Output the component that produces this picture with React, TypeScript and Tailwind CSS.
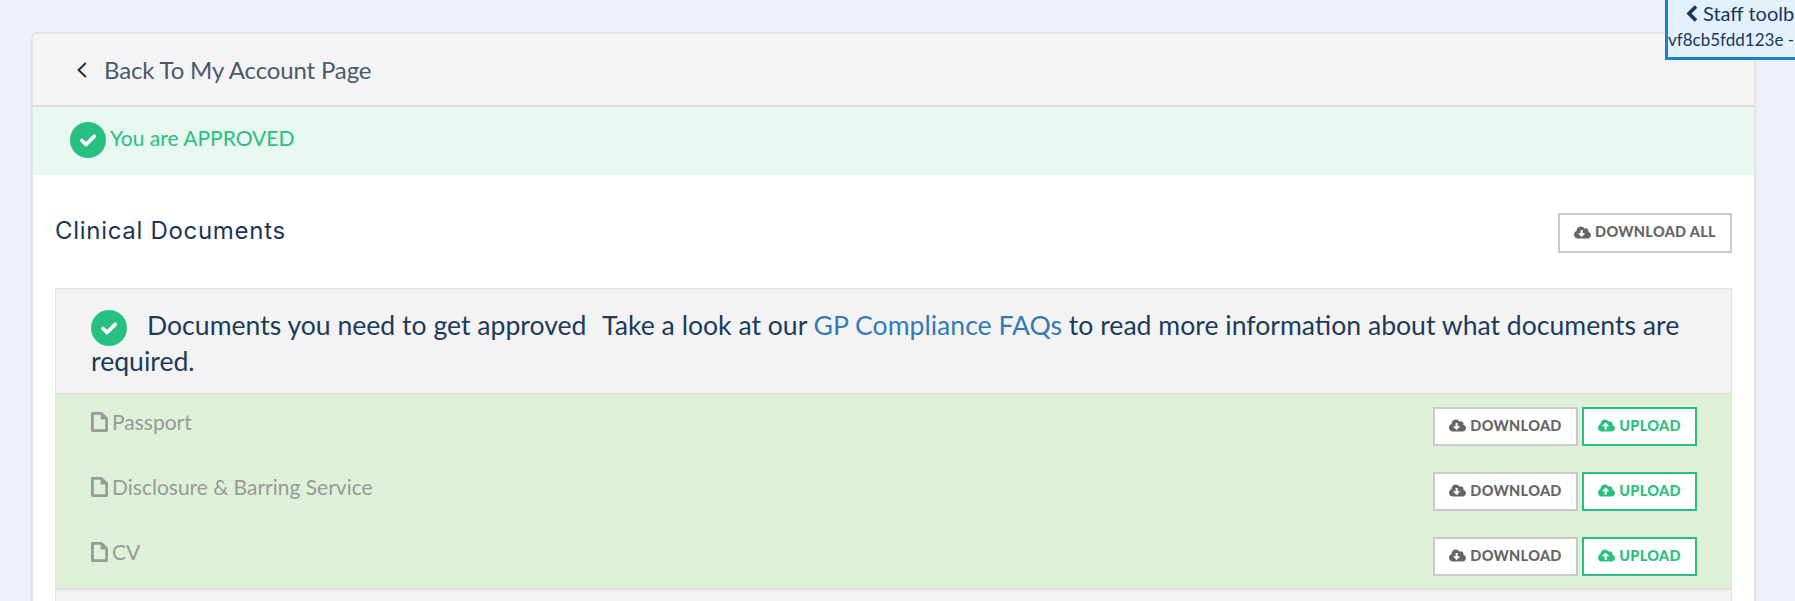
import { FaCloudDownloadAlt, FaCloudUploadAlt } from "react-icons/fa";

const font = { fontFamily: '"Lato", sans-serif' };

function Check({ className = "" }: { className?: string }) {
  return (
    <svg viewBox="0 0 36 36" className={`inline-block h-9 w-9 shrink-0 ${className}`}>
      <circle cx="18" cy="18" r="18" fill="#28c081" />
      <path d="M12 18.5l4 4 8.2-8.2" fill="none" stroke="#ffffff" strokeWidth="3.8" strokeLinecap="round" strokeLinejoin="round" />
    </svg>
  );
}

function FileIcon() {
  return (
    <svg viewBox="0 0 17 20" className="h-[20px] w-[17px] shrink-0">
      <path d="M1.4 1.4H10.5L15.6 6.5V18.6H1.4Z" fill="none" stroke="#999999" strokeWidth="2.8" strokeLinejoin="round" />
      <path d="M9.6 1L16.5 7.6H9.6Z" fill="#999999" />
    </svg>
  );
}

function BackChevron() {
  return (
    <svg viewBox="0 0 10 16" className="mr-[17px] h-[16px] w-[10px] shrink-0">
      <path d="M8.8 1L1.6 8l7.2 7" fill="none" stroke="#1f2d3d" strokeWidth="2" />
    </svg>
  );
}

function StaffChevron() {
  return (
    <svg viewBox="0 0 12 17" className="mr-[5px] h-[17px] w-[12px] shrink-0">
      <path d="M10 1.5L3 8.5l7 7" fill="none" stroke="#17375e" strokeWidth="3.6" />
    </svg>
  );
}

function Btn({ kind, label, wide }: { kind: "gray" | "green"; label: string; wide: string }) {
  const c = kind === "gray" ? "border-[#cacaca] text-[#666666]" : "border-[#28c081] text-[#28c081]";
  return (
    <button className={`flex h-[39px] items-center justify-center gap-[4px] border-2 bg-white pb-[2px] text-[14.5px] font-black tracking-[0.3px] ${c} ${wide}`}>
      {kind === "gray" ? <FaCloudDownloadAlt className="h-[17px] w-[17px]" /> : <FaCloudUploadAlt className="h-[17px] w-[17px]" />}
      {label}
    </button>
  );
}

function Row({ name, last }: { name: string; last?: boolean }) {
  return (
    <div className={`flex items-start justify-between bg-[#dff0d8] pl-[35px] pr-[34px] ${last ? "h-[66px] border-b-2 border-[#dedede]" : "h-[65px] border-b border-[#dee8da]"}`}>
      <div className="flex items-center gap-[4px] pt-[13px] text-[21px] leading-[30px] text-[#999999]">
        <FileIcon />
        <span>{name}</span>
      </div>
      <div className="flex gap-[4px] pt-[13px]">
        <Btn kind="gray" label="DOWNLOAD" wide="w-[145px]" />
        <Btn kind="green" label="UPLOAD" wide="w-[115px]" />
      </div>
    </div>
  );
}

export default function App() {
  return (
    <div style={font} className="relative h-[601px] w-[1795px] overflow-hidden bg-[#edf1f7] pl-[31px] pr-[39px] pt-[32px]">
      <div className="absolute right-[-3px] top-[-3px] z-10 h-[63px] w-[133px] overflow-hidden border-[3px] border-[#1a80d0] bg-[#e3f1fd] text-[#17375e]">
        <div className="flex items-center whitespace-nowrap pl-[18px] pt-[1px] text-[20px] leading-[24px]">
          <StaffChevron />
          Staff toolbar
        </div>
        <div className="whitespace-nowrap pt-[3px] text-[17px] leading-[24px]">vf8cb5fdd123e - 2021</div>
      </div>

      <div className="h-full overflow-hidden rounded-t-[6px] border-x-2 border-t-2 border-[#e2e3e5] bg-white">
        <div className="flex h-[73px] items-center border-b-2 border-[#dedede] bg-[#f4f4f4] pl-[44px] text-[24px] tracking-[-0.15px] text-[#4a5a6a]">
          <BackChevron />
          Back To My Account Page
        </div>
        <div className="flex h-[68px] items-start bg-[#e8f7f0] pl-[37px] pt-[15px] text-[21px] leading-[32px] text-[#28c081]">
          <Check />
          <span className="pl-[4px]">You are APPROVED</span>
        </div>
        <div className="px-[22px]">
          <div className="flex h-[113px] items-start justify-between">
            <h2 className="pt-[38px] text-[24px] leading-[36px] tracking-[0.7px] text-[#1d3557]" style={{ fontFamily: '"Inter", sans-serif' }}>
              Clinical Documents
            </h2>
            <button className="mt-[38px] flex h-[40px] w-[174px] items-center justify-center gap-[4px] border-2 border-[#cacaca] bg-white pb-[2px] text-[14.5px] font-black tracking-[0.3px] text-[#666666]">
              <FaCloudDownloadAlt className="h-[17px] w-[17px]" />
              DOWNLOAD ALL
            </button>
          </div>
          <div className="border border-[#e2e2e2] bg-[#f3f3f4]">
            <div className="h-[105px] border-b border-[#dedede] px-[35px] pt-[18px] text-[26.6px] leading-[36px] text-[#1d3b5a]">
              <Check className="my-[-6px] mr-[20px] align-middle" />
              Documents you need to get approved&nbsp;&nbsp;<span className="ml-[-4px]"> Take a look at our </span><a className="text-[#337ab7]">GP Compliance FAQs</a> to read more information about what documents are required.
            </div>
            <Row name="Passport" />
            <Row name="Disclosure & Barring Service" />
            <Row name="CV" last />
            <div className="h-[20px]" />
          </div>
        </div>
      </div>
    </div>
  );
}
